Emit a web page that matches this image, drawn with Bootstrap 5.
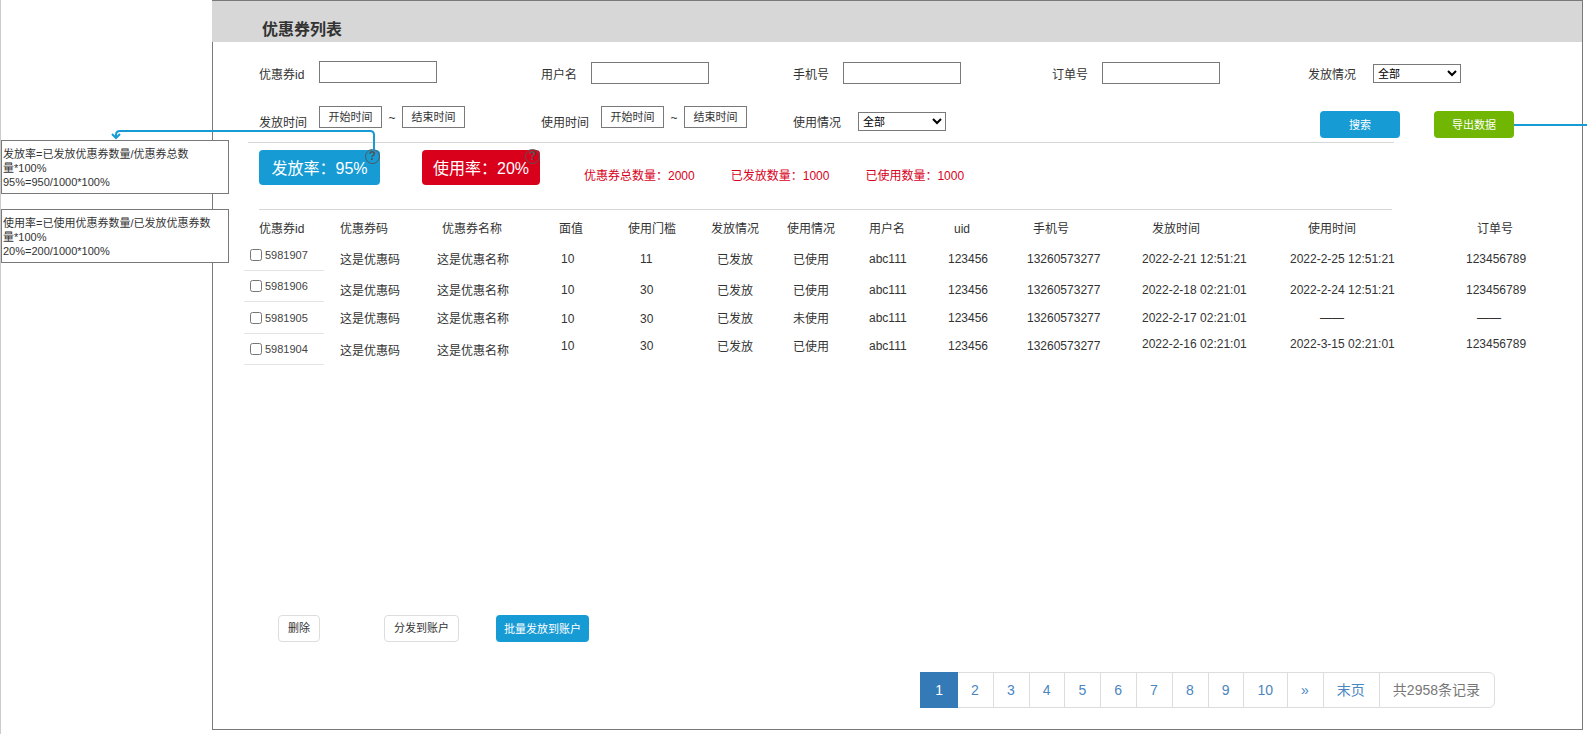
<!DOCTYPE html>
<html lang="zh-CN">
<head>
<meta charset="utf-8">
<meta name="viewport" content="width=device-width, initial-scale=1">
<title>优惠券列表</title>
<link href="https://cdn.jsdelivr.net/npm/bootstrap@5.3.0/dist/css/bootstrap.min.css" rel="stylesheet">
<style>
body { font-family: "Liberation Sans", "Noto Sans CJK SC", sans-serif; font-size: 12px; line-height: 18px; color: #333; background: #fff; overflow-x: hidden; }
.page { border-left: 1px solid #ccc; padding-bottom: 4px; padding-right: 4px; }
/* annotation column */
.notes { width: 211px; flex: none; padding-top: 140px; z-index: 2; }
.note { width: 228px; height: 54px; border: 1px solid #797979; background: #fff; font-size: 11px; line-height: 14px; padding: 6px 8px 0 1px; margin-bottom: 15px; }
.connector { position: absolute; left: 110px; top: 129px; z-index: 3; pointer-events: none; }
/* main panel */
.panel { border: 1px solid #797979; min-width: 0; }
.title-bar { height: 41px; background: #d7d7d7; padding: 18px 0 0 50px; margin-left: -1px; }
.title-bar h1 { font-size: 16px; line-height: 22px; font-weight: 700; margin: 0; }
.filters { display: grid; grid-template-columns: 282fr 252fr 259fr 256fr 256fr; row-gap: 22px; padding: 19px 18px 0 46px; }
.filters label, .filters .caption { flex: none; width: 50px; white-space: nowrap; padding-top: 5px; }
.filters .wide { width: 60px; }
.filters .wider { width: 65px; }
.filters .second { padding-top: 8px; }
.box-input { width: 118px; height: 22px; border: 1px solid #797979; padding: 0 4px; margin-top: 1px; }
.wide + .box-input { margin-top: 0; }
.box-select { width: 88px; height: 19px; margin-top: 3px; border: 1px solid #797979; border-radius: 0; background: #fff; font-size: 11px; padding: 0; color: #000; }
.second + .box-select { margin-top: 6px; }
.date-btn { width: 63px; height: 22px; border: 1px solid #797979; background: #fff; font-size: 11px; line-height: 20px; padding: 0; color: #333; }
.tilde { width: 20px; text-align: center; line-height: 24px; }
.act { font-size: 11px; line-height: 17px; height: 27px; padding: 5px 8px 4px; border: 0; border-radius: 4px; color: #fff; background: #169bd5; }
.act:hover { color: #fff; background: #1288bd; }
.act-wide { width: 80px; }
.act-green { background: #70b603; }
.act-plain { background: #fff; color: #333; border: 1px solid #ddd; padding: 3px 10px; }
.searching { padding: 5px 50px 0 12px; }
.out-line { position: absolute; left: 100%; top: 13px; width: 80px; height: 2px; background: #169bd5; }
.rule { height: 1px; background: #d7d7d7; margin: 4px 188px 0 35px; }
.rule-inner { margin: 0 190px 0 46px; }
.rates { padding: 7px 0 24px 46px; }
.rate { position: relative; border: 0; border-radius: 4px; height: 35px; padding: 0; font-size: 16px; line-height: 37px; color: #fff; background: #169bd5; width: 121px; white-space: nowrap; }
.rate-red { background: #d9001b; width: 118px; margin-left: 42px; }
.help { position: absolute; right: 0; top: -1px; width: 15px; height: 15px; border: 1px solid #555; border-radius: 50%; font-size: 12px; line-height: 13px; font-weight: 700; color: #555; }
.stats { gap: 36px; padding: 17px 0 0 44px; color: #d9001b; white-space: nowrap; }
/* coupon table */
.coupons { table-layout: fixed; width: calc(100% - 31px); margin-left: 31px; border-collapse: collapse; }
.coupons th, .coupons td { padding: 0; font-weight: 400; white-space: nowrap; text-align: left; vertical-align: top; }
.coupons th { padding-top: 10px; height: 30px; }
.coupons td { height: 31px; padding-top: 11px; }
.coupons td:nth-child(4), .coupons td:nth-child(5), .coupons td:nth-child(n+8) { padding-top: 10px; }
.coupons th:nth-child(1) { padding-left: 15px; }
.coupons th:nth-child(3) { padding-left: 5px; }
.coupons td:nth-child(4) { padding-left: 2px; }
.coupons td:nth-child(5) { padding-left: 12px; }
.coupons td:nth-child(6), .coupons td:nth-child(7) { padding-left: 6px; }
.coupons th:nth-child(9), .coupons th:nth-child(10) { padding-left: 6px; }
.coupons th:nth-child(11) { padding-left: 10px; }
.coupons th:nth-child(12) { padding-left: 18px; }
.coupons th:nth-child(13) { padding-left: 11px; }
.coupons .row-c td { padding-top: 8px; height: 32px; }
.coupons .row-c td:nth-child(n+8) { padding-top: 7px; }
.coupons .row-d td { padding-top: 4px; }
.coupons .row-d td:nth-child(2), .coupons .row-d td:nth-child(3) { padding-top: 8px; }
.coupons .row-d td:nth-child(4), .coupons .row-d td:nth-child(5), .coupons .row-d td:nth-child(n+8) { padding-top: 3px; }
.coupons .row-d td:nth-child(n+11) { padding-top: 1px; }
.coupons .none-time { padding-left: 30px; }
.coupons .none-order { padding-left: 11px; }
.coupons tbody td:first-child { padding-top: 0; }
.pick { display: flex; align-items: center; gap: 3px; width: 80px; height: 31px; padding-left: 6px; border-bottom: 1px solid #e4e4e4; font-size: 11px; color: #444; }
.row-c .pick { height: 32px; }
.pick input { width: 12px; height: 12px; margin: 0; }
.bulk { padding: 0 0 30px 65px; }
.bulk-main { padding-left: 64px; padding-right: 37px; }
.bulk .act-plain { padding: 3px 9px; }
.pager { padding: 0 87px 21px 0; }
.pager .page-link { font-size: 14px; line-height: 20px; height: 36px; padding: 7px 14px 7px 13px; border-color: #ddd; color: #4a86bf; white-space: nowrap; }
.pager .active .page-link { background: #337ab7; border-color: #337ab7; color: #fff; border-radius: 0; padding-left: 14px; }
.pager .disabled .page-link { background: #fff; color: #777; }
</style>
</head>
<body>
<div class="page position-relative d-flex min-vh-100 overflow-hidden">
  <aside class="notes">
    <div class="note">发放率=已发放优惠券数量/优惠券总数<br>量*100%<br>95%=950/1000*100%</div>
    <div class="note">使用率=已使用优惠券数量/已发放优惠券数<br>量*100%<br>20%=200/1000*100%</div>
  </aside>
  <svg class="connector" width="268" height="22" fill="none" stroke="#169bd5" stroke-width="2" aria-hidden="true">
    <path d="M263 21V6Q263 2 259 2H9Q5 2 5 6V9M1 5L5 9L9 5"/>
  </svg>

  <main class="panel flex-grow-1 d-flex flex-column">
    <header class="title-bar"><h1>优惠券列表</h1></header>

    <form class="filters">
      <div class="d-flex"><label class="wide" for="f-id">优惠券id</label><input class="box-input" id="f-id" type="text"></div>
      <div class="d-flex"><label for="f-user">用户名</label><input class="box-input" id="f-user" type="text"></div>
      <div class="d-flex"><label for="f-phone">手机号</label><input class="box-input" id="f-phone" type="text"></div>
      <div class="d-flex"><label for="f-order">订单号</label><input class="box-input" id="f-order" type="text"></div>
      <div class="d-flex"><label class="wider" for="f-send">发放情况</label><select class="box-select" id="f-send"><option>全部</option></select></div>

      <div class="d-flex"><span class="caption wide second">发放时间</span><button type="button" class="date-btn">开始时间</button><span class="tilde">~</span><button type="button" class="date-btn">结束时间</button></div>
      <div class="d-flex"><span class="caption wide second">使用时间</span><button type="button" class="date-btn">开始时间</button><span class="tilde">~</span><button type="button" class="date-btn">结束时间</button></div>
      <div class="d-flex"><label class="wider second" for="f-use">使用情况</label><select class="box-select" id="f-use"><option>全部</option></select></div>
      <div></div>
      <div class="searching d-flex justify-content-between">
        <button type="button" class="btn act act-wide">搜索</button>
        <div class="position-relative"><button type="button" class="btn act act-wide act-green">导出数据</button><span class="out-line"></span></div>
      </div>
    </form>

    <div class="rule"></div>
    <section class="rates d-flex">
      <button type="button" class="rate">发放率：95%<span class="help">?</span></button>
      <button type="button" class="rate rate-red">使用率：20%<span class="help">?</span></button>
      <div class="stats d-flex">
        <span>优惠券总数量：2000</span>
        <span>已发放数量：1000</span>
        <span>已使用数量：1000</span>
      </div>
    </section>
    <div class="rule rule-inner"></div>

    <div class="flex-grow-1">
      <table class="coupons">
        <colgroup><col style="width:96px"><col style="width:97px"><col style="width:122px"><col style="width:69px"><col style="width:83px"><col style="width:76px"><col style="width:82px"><col style="width:79px"><col style="width:79px"><col style="width:115px"><col style="width:148px"><col style="width:176px"><col style="width:116px"></colgroup>
        <thead><tr><th>优惠券id</th><th>优惠券码</th><th>优惠券名称</th><th>面值</th><th>使用门槛</th><th>发放情况</th><th>使用情况</th><th>用户名</th><th>uid</th><th>手机号</th><th>发放时间</th><th>使用时间</th><th>订单号</th></tr></thead>
        <tbody>
          <tr><td><label class="pick"><input type="checkbox">5981907</label></td><td>这是优惠码</td><td>这是优惠名称</td><td>10</td><td>11</td><td>已发放</td><td>已使用</td><td>abc111</td><td>123456</td><td>13260573277</td><td>2022-2-21 12:51:21</td><td>2022-2-25 12:51:21</td><td>123456789</td></tr>
          <tr><td><label class="pick"><input type="checkbox">5981906</label></td><td>这是优惠码</td><td>这是优惠名称</td><td>10</td><td>30</td><td>已发放</td><td>已使用</td><td>abc111</td><td>123456</td><td>13260573277</td><td>2022-2-18 02:21:01</td><td>2022-2-24 12:51:21</td><td>123456789</td></tr>
          <tr class="row-c"><td><label class="pick"><input type="checkbox">5981905</label></td><td>这是优惠码</td><td>这是优惠名称</td><td>10</td><td>30</td><td>已发放</td><td>未使用</td><td>abc111</td><td>123456</td><td>13260573277</td><td>2022-2-17 02:21:01</td><td class="none-time">——</td><td class="none-order">——</td></tr>
          <tr class="row-d"><td><label class="pick"><input type="checkbox">5981904</label></td><td>这是优惠码</td><td>这是优惠名称</td><td>10</td><td>30</td><td>已发放</td><td>已使用</td><td>abc111</td><td>123456</td><td>13260573277</td><td>2022-2-16 02:21:01</td><td>2022-3-15 02:21:01</td><td>123456789</td></tr>
        </tbody>
      </table>
    </div>

    <div class="bulk d-flex">
      <button type="button" class="btn act act-plain">删除</button>
      <div class="bulk-main"><button type="button" class="btn act act-plain">分发到账户</button></div>
      <button type="button" class="btn act">批量发放到账户</button>
    </div>
    <nav class="pager d-flex justify-content-end" aria-label="分页">
      <ul class="pagination mb-0">
        <li class="page-item active"><a class="page-link" href="#">1</a></li>
        <li class="page-item"><a class="page-link" href="#">2</a></li>
        <li class="page-item"><a class="page-link" href="#">3</a></li>
        <li class="page-item"><a class="page-link" href="#">4</a></li>
        <li class="page-item"><a class="page-link" href="#">5</a></li>
        <li class="page-item"><a class="page-link" href="#">6</a></li>
        <li class="page-item"><a class="page-link" href="#">7</a></li>
        <li class="page-item"><a class="page-link" href="#">8</a></li>
        <li class="page-item"><a class="page-link" href="#">9</a></li>
        <li class="page-item"><a class="page-link" href="#">10</a></li>
        <li class="page-item"><a class="page-link" href="#">»</a></li>
        <li class="page-item"><a class="page-link" href="#">末页</a></li>
        <li class="page-item disabled"><span class="page-link">共2958条记录</span></li>
      </ul>
    </nav>
  </main>
</div>
<script src="https://cdn.jsdelivr.net/npm/bootstrap@5.3.0/dist/js/bootstrap.bundle.min.js"></script>
</body>
</html>
